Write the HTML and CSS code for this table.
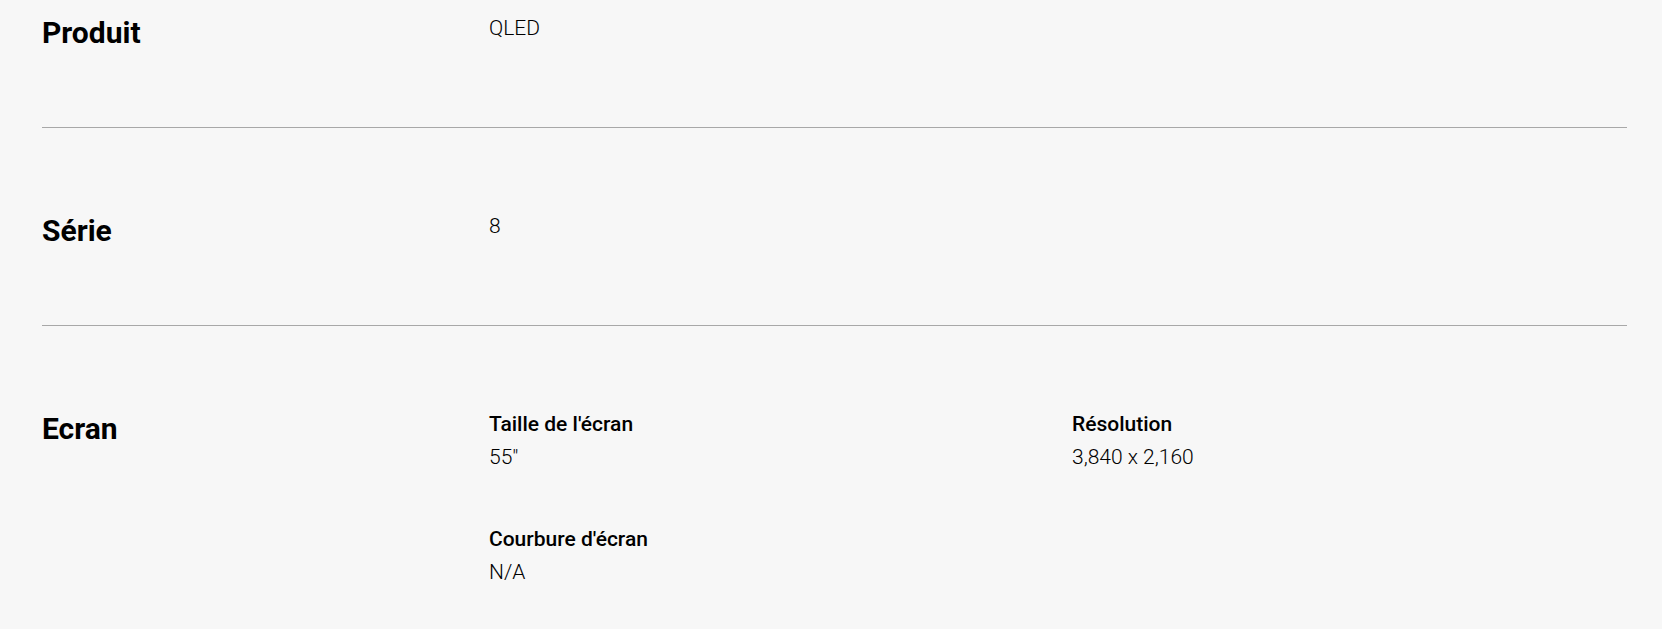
FILE: index.html
```html
<!DOCTYPE html>
<html lang="fr">
<head>
<meta charset="utf-8">
<title>Spécifications</title>
<link rel="stylesheet" href="styles.css">
</head>
<body>
<main class="specs">
  <section class="spec-row spec-row--first">
    <h2 class="spec-title">Produit</h2>
    <div class="spec-values">
      <div class="spec-item">
        <p class="spec-value">QLED</p>
      </div>
    </div>
  </section>
  <section class="spec-row">
    <h2 class="spec-title">Série</h2>
    <div class="spec-values">
      <div class="spec-item">
        <p class="spec-value">8</p>
      </div>
    </div>
  </section>
  <section class="spec-row spec-row--last">
    <h2 class="spec-title">Ecran</h2>
    <div class="spec-values spec-values--grid">
      <div class="spec-item">
        <p class="spec-label">Taille de l'écran</p>
        <p class="spec-value">55"</p>
      </div>
      <div class="spec-item">
        <p class="spec-label">Résolution</p>
        <p class="spec-value">3,840 x 2,160</p>
      </div>
      <div class="spec-item">
        <p class="spec-label">Courbure d'écran</p>
        <p class="spec-value">N/A</p>
      </div>
    </div>
  </section>
</main>
</body>
</html>
```
FILE: styles.css
```css
html, body {
  margin: 0;
  padding: 0;
  background: #f7f7f7;
}

body {
  font-family: Roboto, "Liberation Sans", sans-serif;
  color: #000;
  overflow: hidden;
}

.specs {
  padding: 0 35px 0 42px;
}

.spec-row {
  display: flex;
  align-items: flex-start;
  padding: 82px 0 73px;
  border-bottom: 1px solid #a8a8a8;
}

.spec-row--first {
  padding-top: 12px;
}

.spec-row--last {
  border-bottom: none;
}

.spec-title {
  flex: 0 0 447px;
  margin: 0;
  font-family: Roboto, "Liberation Sans", sans-serif;
  font-size: 30px;
  font-weight: 700;
  line-height: 42px;
  letter-spacing: 0;
}

.spec-values {
  flex: 1;
}

.spec-values--grid {
  display: grid;
  grid-template-columns: 583px 1fr;
  row-gap: 49px;
}

.spec-label,
.spec-value {
  margin: 0;
  font-size: 21px;
  line-height: 33px;
}

.spec-label {
  font-weight: 500;
}

.spec-value {
  font-weight: 300;
}
```
